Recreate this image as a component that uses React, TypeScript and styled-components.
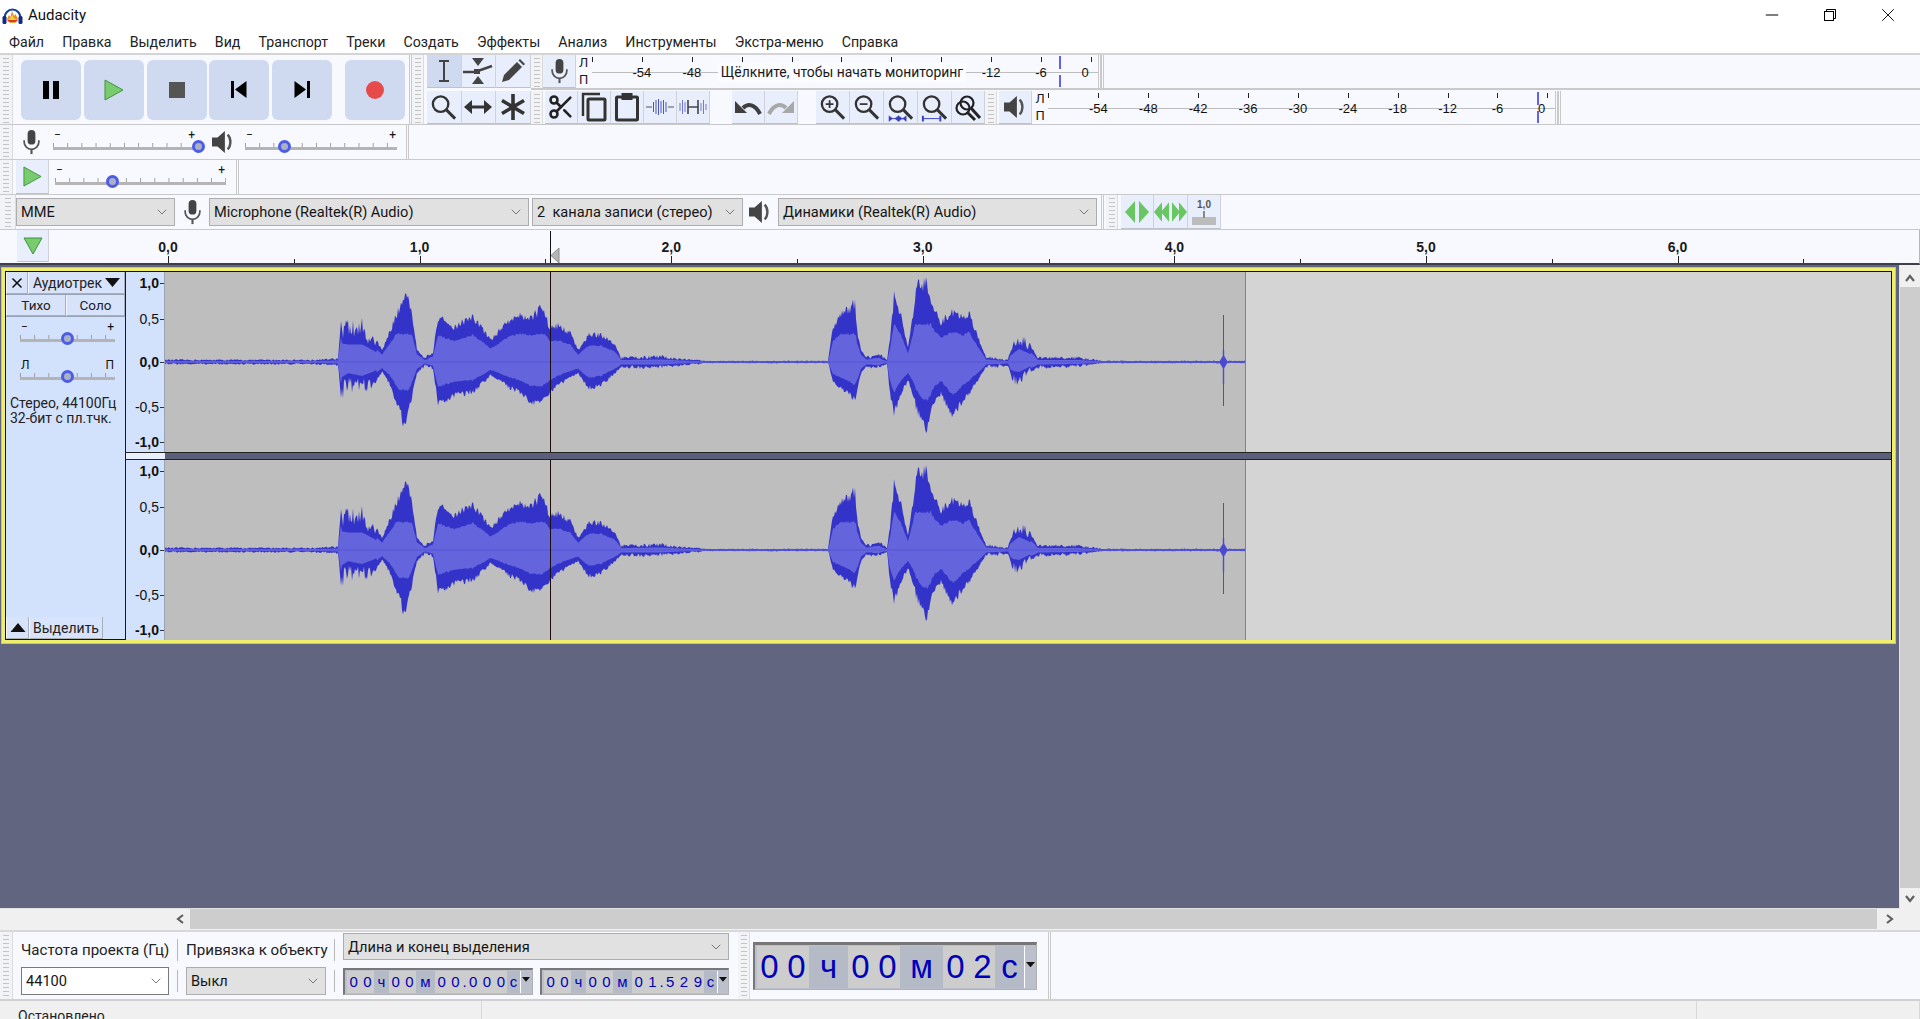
import React from 'react'
import styled, { createGlobalStyle } from 'styled-components'
import { ChevronDown, Minus, Scissors, X } from 'lucide-react'

const GlobalStyle = createGlobalStyle`
    html, body {
        margin: 0;
        padding: 0;
        height: 1019px;
        overflow: hidden;
        background: #f0f0f0;
        font-family: Roboto, "Liberation Sans", sans-serif;
        font-size: 14.5px;
        color: #1a1a1a;
    }
    * { box-sizing: border-box; }
`

const PANEL = '#f8f9fe'
const LINE = '#c9c9c9'
const BTN = '#e8eefb'

const Window = styled.div`
    width: 1920px;
    height: 1019px;
    display: flex;
    flex-direction: column;
    overflow: hidden;
`

/* title + menu */
const TitleBar = styled.div`
    height: 32px;
    flex: none;
    background: #fff;
    display: flex;
    align-items: center;
    padding: 0 3px 2px 2px;
    font-size: 15px;
    color: #111;
`
const AppName = styled.span`
    flex: 1;
    margin-left: 5px;
`
const WinButton = styled.div`
    width: 58px;
    height: 30px;
    display: flex;
    align-items: center;
    justify-content: center;
    color: #000;
`
const MenuBar = styled.div`
    height: 23px;
    flex: none;
    background: #fff;
    display: flex;
    align-items: center;
    padding: 0 0 2px 9px;
    gap: 18.2px;
    border-bottom: 2px solid #d4d4d4;
    font-size: 14.2px;
`
const MenuItem = styled.span`
    color: #222;
    white-space: nowrap;
`

/* toolbars */
const Row = styled.div<{ $h: number }>`
    flex: none;
    height: ${p => p.$h}px;
    display: flex;
    background: ${PANEL};
    border-bottom: 1px solid ${LINE};
`
const Gripper = styled.div<{ $w?: number }>`
    flex: 0 0 ${p => p.$w ?? 13}px;
    align-self: stretch;
    background-color: #f2f3f7;
    background-image: linear-gradient(#c4c4c4 1px, transparent 1px);
    background-size: 6px 4px;
    background-position: center 3px;
    background-repeat: repeat-y;
    border-right: 1px solid #dcdcdc;
`
const Divider = styled.div`
    flex: 0 0 3px;
    align-self: stretch;
    border-left: 1px solid ${LINE};
    border-right: 1px solid ${LINE};
`
const Section = styled.div<{ $w: number }>`
    flex: 0 0 ${p => p.$w}px;
    display: flex;
    align-items: center;
    align-self: stretch;
`
const Spacer = styled.div<{ $w: number }>`
    flex: 0 0 ${p => p.$w}px;
`
const TransportButtons = styled.div`
    display: flex;
    gap: 2.75px;
    padding-left: 8px;
`
const BigButton = styled.div<{ $gap?: number }>`
    width: 60px;
    height: 60px;
    margin-left: ${p => p.$gap ?? 0}px;
    background: #cfdaf0;
    border-radius: 6px;
    display: flex;
    align-items: center;
    justify-content: center;
`
const IconBtn = styled.div<{ $active?: boolean; $w?: number; $h?: number }>`
    flex: 0 0 ${p => p.$w ?? 33}px;
    height: ${p => p.$h ?? 33}px;
    background: ${p => (p.$active ? '#cfdaf0' : BTN)};
    border-right: 1px solid #cfd2d9;
    border-bottom: 1px solid #bfc2c9;
    display: flex;
    align-items: center;
    justify-content: center;
`
const ToolGrid = styled.div`
    display: grid;
    grid-template-columns: repeat(3, 34.5px);
    grid-auto-rows: 33px;
    row-gap: 3px;
    padding-left: 3px;
`
const ToolColumn = styled.div`
    flex: 1;
    display: flex;
    flex-direction: column;
`
const RecRow = styled.div`
    height: 35px;
    display: flex;
    align-items: center;
    border-bottom: 2px solid ${LINE};
`
const EditRow = styled.div`
    height: 33px;
    margin-top: 1px;
    display: flex;
    align-items: center;
`

/* meters */
const Meter = styled.div`
    flex: 0 0 517px;
    align-self: stretch;
    display: flex;
    position: relative;
    margin-left: 2px;
`
const Channels = styled.div`
    flex: 0 0 14px;
    display: flex;
    flex-direction: column;
    justify-content: space-around;
    font-size: 13px;
    line-height: 14px;
    padding-left: 1px;
`
const Scale = styled.div`
    flex: 1;
    display: flex;
    background: linear-gradient(#bdbdbd, #bdbdbd) 0 52% / 100% 1px no-repeat;
`
const MarkLabel = styled.span`
    margin-top: 2px;
    font-size: 13px;
    line-height: 18px;
    transform: translateX(-50%);
    color: #111;
    white-space: nowrap;
    font-family: "Liberation Sans", sans-serif;
`
const Mark = styled.div`
    flex: 0 0 49.9px;
    display: flex;
    flex-direction: column;
    align-items: flex-start;
    &:last-child {
        flex-basis: 4px;
        ${MarkLabel} { transform: translateX(-130%); }
    }
`
const MarkTick = styled.div`
    width: 1px;
    height: 5px;
    margin-top: 2px;
    background: #222;
`
const MeterHint = styled.div`
    position: absolute;
    left: 140px;
    top: 8px;
    width: 248px;
    height: 19px;
    background: #fbfcff;
    font-size: 13.9px;
    line-height: 19px;
    text-align: center;
    white-space: nowrap;
`
const MeterPeak = styled.div<{ $left: number }>`
    position: absolute;
    left: ${p => p.$left}px;
    top: 1px;
    bottom: 1px;
    width: 2px;
    background: linear-gradient(#5f62f0 42%, transparent 42%, transparent 60%, #5f62f0 60%);
`

/* sliders */
const Slider = styled.div<{ $w: number; $left: number }>`
    flex: 0 0 ${p => p.$w}px;
    margin-left: ${p => p.$left}px;
    position: relative;
    height: 24px;
`
const SliderEnds = styled.div`
    display: flex;
    justify-content: space-between;
    height: 11px;
    font-size: 12px;
    line-height: 11px;
    padding: 0 1px;
    color: #111;
`
const SliderTicks = styled.div`
    height: 4px;
    margin-top: 2px;
    background-image: linear-gradient(90deg, #9c9c9c 1px, transparent 1px);
    background-size: 14.2px 100%;
`
const SliderBar = styled.div`
    height: 3px;
    background: #b4b4b4;
`
const Thumb = styled.div`
    position: absolute;
    top: 10px;
    width: 13px;
    height: 13px;
    margin-left: -6.5px;
    border-radius: 50%;
    border: 3px solid #4c5ce6;
    background: #aab0c6;
`

/* combos */
const Combo = styled.div<{ $w: number; $white?: boolean; $h?: number }>`
    flex: 0 0 ${p => p.$w}px;
    width: ${p => p.$w}px;
    height: ${p => p.$h ?? 28}px;
    display: flex;
    align-items: center;
    justify-content: space-between;
    padding: 0 4px 0 4px;
    background: ${p => (p.$white ? '#fff' : '#e1e1e1')};
    border: 1px solid ${p => (p.$white ? '#7a7a7a' : '#adadad')};
    font-size: 14.6px;
    color: #151515;
    white-space: nowrap;
    svg { color: #666; flex: none; }
`
const TopCombo = styled(Combo)`
    align-self: start;
`
const IconSlot = styled.div<{ $w: number }>`
    flex: 0 0 ${p => p.$w}px;
    display: flex;
    justify-content: center;
`

/* ruler */
const RulerBar = styled.div`
    flex: none;
    height: 35px;
    display: flex;
    position: relative;
    background: ${PANEL};
    padding-left: 17px;
    border-right: 1px solid #b8b8b8;
    border-bottom: 2px solid #3e3f4a;
`
const RulerCell = styled.div`
    flex: 0 0 125.8px;
    display: flex;
    flex-direction: column;
    justify-content: flex-end;
    align-items: flex-start;
`
const RulerLabel = styled.span`
    font-weight: 700;
    font-size: 14px;
    line-height: 16px;
    margin-bottom: 1px;
    transform: translateX(-50%);
    font-family: "Liberation Sans", sans-serif;
    color: #1a1a1a;
`
const RulerTick = styled.div<{ $major?: boolean }>`
    width: 1px;
    height: ${p => (p.$major ? 7 : 4)}px;
    background: #222;
`
const PlayPin = styled.div`
    position: absolute;
    left: 550px;
    top: 1px;
    bottom: 0;
    width: 10px;
    border-left: 1px solid #111;
    display: flex;
    align-items: flex-end;
`

/* workspace */
const Workspace = styled.div`
    flex: none;
    height: 665px;
    display: flex;
`
const MainColumn = styled.div`
    flex: 1;
    display: flex;
    flex-direction: column;
    min-width: 0;
`
const TrackArea = styled.div`
    height: 644px;
    background: #62657f;
    padding: 2px 3px 0 1px;
    border-right: 1px solid #e2e2e2;
    border-bottom: 1px solid #e2e2e2;
`
const TrackFrame = styled.div`
    height: 377px;
    border: 4px solid #efef6c;
    outline: 1px solid #c4c486;
    outline-offset: -1px;
    display: flex;
    background: #111;
    padding: 1px;
`
const TrackInfo = styled.div`
    flex: 0 0 120px;
    background: #d2e1fc;
    border-right: 1px solid #1a1a1a;
    display: flex;
    flex-direction: column;
`
const InfoRow = styled.div<{ $h: number }>`
    display: flex;
    flex: 0 0 ${p => p.$h}px;
    border-bottom: 1px solid #9aa3b5;
`
const InfoButton = styled.div<{ $w?: number }>`
    flex: ${p => (p.$w ? `0 0 ${p.$w}px` : 1)};
    display: flex;
    align-items: center;
    justify-content: ${p => (p.$w ? 'center' : 'space-between')};
    padding: ${p => (p.$w ? 0 : '0 4px')};
    background: #d7e3fa;
    border-left: 1px solid #f4f7ff;
    border-right: 1px solid #a8aebb;
    border-bottom: 1px solid #a8aebb;
    font-size: 14px;
    color: #222;
    white-space: nowrap;
`
const InfoCenter = styled(InfoButton)`
    justify-content: center;
    font-size: 13.5px;
`
const InfoSlider = styled.div<{ $top: number }>`
    position: relative;
    height: 24px;
    margin: ${p => p.$top}px 10px 0 14px;
`
const InfoText = styled.div`
    margin: 12px 0 0 4px;
    font-size: 14px;
    line-height: 15px;
    color: #222;
    white-space: nowrap;
`
const InfoFooter = styled.div`
    margin-top: auto;
    height: 22px;
    display: flex;
`
const ChannelStack = styled.div`
    flex: 1;
    display: flex;
    flex-direction: column;
    min-width: 0;
`
const ChannelGap = styled.div`
    flex: 0 0 8px;
    display: flex;
    border-top: 1px solid #222;
    border-bottom: 1px solid #222;
    background: #5c5f7a;
`
const GapRuler = styled.div`
    flex: 0 0 39px;
    background: #e8effd;
`
const Channel = styled.div<{ $h: number }>`
    flex: 0 0 ${p => p.$h}px;
    display: flex;
`
const VRuler = styled.div`
    flex: 0 0 39px;
    background: #d2e1fc;
    display: grid;
    grid-template-rows: 22px 50px 36px 54px 16px;
    border-right: 1px solid #9aa3b5;
`
const VRulerRow = styled.div<{ $strong?: boolean }>`
    display: flex;
    align-items: center;
    justify-content: flex-end;
    font-size: 14px;
    font-family: "Liberation Sans", sans-serif;
    color: #111;
    font-weight: ${p => (p.$strong ? 700 : 400)};
    &::after {
        content: '';
        width: 4px;
        height: 1px;
        margin-left: 1px;
        background: #333;
    }
`
const Clip = styled.div`
    flex: 0 0 1081px;
    position: relative;
    background: #bebebe;
    border-right: 1px solid #828282;
`
const Wave = styled.svg`
    display: block;
`
const Cursor = styled.div`
    position: absolute;
    left: 385px;
    top: 0;
    bottom: 0;
    width: 1px;
    background: #1c0c0c;
`
const EmptyTrack = styled.div`
    flex: 1;
    background: #d4d4d4;
`

/* scrollbars */
const HScroll = styled.div`
    flex: 1;
    display: flex;
    background: #f0f0f0;
    padding-bottom: 1px;
`
const HThumb = styled.div`
    flex: 1;
    background: #cdcdcd;
`
const ScrollArrow = styled.div<{ $w?: number }>`
    flex: 0 0 ${p => p.$w ?? 20}px;
    display: flex;
    align-items: center;
    justify-content: center;
`
const VScroll = styled.div`
    flex: 0 0 20px;
    display: flex;
    flex-direction: column;
    background: #f0f0f0;
    padding-top: 5px;
`
const VThumb = styled.div`
    flex: 1;
    background: #cdcdcd;
`

/* selection bar */
const SelectionBar = styled.div`
    flex: none;
    height: 71px;
    display: flex;
    background: ${PANEL};
    border-top: 2px solid #d8d8d8;
    border-bottom: 2px solid #d0d0d0;
`
const SelectionGrid = styled.div`
    flex: 0 0 725px;
    display: grid;
    grid-template-columns: 148px 17px 140px 17px 386px;
    grid-template-rows: 33px 30px;
    padding: 1px 0 0 8px;
    align-items: center;
    justify-items: start;
`
const SelLabel = styled.div`
    font-size: 15.1px;
    white-space: nowrap;
    color: #222;
    line-height: 20px;
`
const SelSep = styled.div`
    justify-self: center;
    width: 1px;
    height: 22px;
    background: #b8b8b8;
`
const TimeRow = styled.div`
    display: flex;
    justify-content: space-between;
    width: 386px;
`
const TimeBox = styled.div<{ $w: number; $h: number; $big?: boolean }>`
    flex: 0 0 ${p => p.$w}px;
    width: ${p => p.$w}px;
    height: ${p => p.$h}px;
    display: flex;
    background: #bcc0cc;
    border: 1px solid #b0b0b0;
    border-top: ${p => (p.$big ? 3 : 2)}px solid #777;
    border-left: 2px solid #777;
    padding: 1px 1px 1px 2px;
    color: #0000b8;
    font-family: "Liberation Sans", sans-serif;
`
const TimeCell = styled.div<{ $w: number; $unit?: boolean; $size: number; $space?: number }>`
    flex: 0 0 ${p => p.$w}px;
    min-width: 0;
    display: flex;
    align-items: center;
    justify-content: center;
    background: ${p => (p.$unit ? '#b5bac7' : '#cdcdcd')};
    font-size: ${p => p.$size}px;
    letter-spacing: ${p => p.$space ?? 0}px;
    padding-left: ${p => p.$space ?? 0}px;
    line-height: 1;
`
const TimeMenu = styled.div`
    flex: 1;
    min-width: 0;
    border-left: 1px solid #fff;
    background: #bcc0cc;
    display: flex;
    align-items: center;
    justify-content: center;
    padding-bottom: 4px;
`
const BigTimeWrap = styled.div`
    flex: 0 0 298px;
    display: flex;
    align-items: center;
    padding-left: 3px;
`

/* status */
const StatusBar = styled.div`
    flex: 1;
    display: flex;
    background: #f0f0f0;
    font-size: 14px;
    line-height: 17px;
    overflow: hidden;
`
const StatusCell = styled.div<{ $w?: number }>`
    flex: ${p => (p.$w ? `0 0 ${p.$w}px` : 1)};
    border-right: 1px solid #d8d8d8;
    padding: 7px 0 0 18px;
    white-space: nowrap;
    color: #222;
`

/* icons */
const DARK = '#444'
const GREEN = '#79cc6e'
const GREEN_LINE = '#3f9440'

const AppIcon = () => (
    <svg width="21" height="19" viewBox="0 0 21 19">
        <path d="M2.5 12 A8 8.5 0 0 1 18.5 12" fill="none" stroke="#1b3f9e" strokeWidth="2.2" />
        <rect x="0.5" y="10" width="4" height="8" rx="1.5" fill="#14297a" />
        <rect x="16.5" y="10" width="4" height="8" rx="1.5" fill="#14297a" />
        <path d="M5 13 L7 9 L8.5 11 L10 5 L12 10 L13.5 8 L16 13 L13 17 L8 17 Z" fill="#ef8b1d" />
        <path d="M6 14 L9 11 L10.5 9 L12 12 L15 14 L12 16.5 L8.5 16.5 Z" fill="#f2d23b" />
        <path d="M5 14 L16 14 L14 16 L7 16 Z" fill="#e2362a" />
    </svg>
)
const RestoreIcon = () => (
    <svg width="12" height="12" viewBox="0 0 12 12" fill="none" stroke="#000" strokeWidth="1">
        <rect x="0.5" y="2.5" width="9" height="9" />
        <path d="M2.5 2.5 V0.5 H11.5 V9.5 H9.5" />
    </svg>
)
const PauseIcon = () => (
    <svg width="18" height="20" viewBox="0 0 18 20">
        <rect x="1" y="1" width="6" height="18" fill="#000" />
        <rect x="11" y="1" width="6" height="18" fill="#000" />
    </svg>
)
const PlayIcon = ({ w = 20, h = 22 }: { w?: number; h?: number }) => (
    <svg width={w} height={h} viewBox="0 0 20 22">
        <path d="M1 1 L19 11 L1 21 Z" fill={GREEN} stroke={GREEN_LINE} strokeWidth="1" />
    </svg>
)
const StopIcon = () => (
    <svg width="16" height="16" viewBox="0 0 16 16">
        <rect width="16" height="16" fill="#555" />
    </svg>
)
const SkipStartIcon = () => (
    <svg width="16" height="17" viewBox="0 0 16 17">
        <rect x="0" y="0" width="3" height="17" fill="#000" />
        <path d="M15.5 0 V17 L4 8.5 Z" fill="#000" />
    </svg>
)
const SkipEndIcon = () => (
    <svg width="16" height="17" viewBox="0 0 16 17">
        <rect x="13" y="0" width="3" height="17" fill="#000" />
        <path d="M0.5 0 V17 L12 8.5 Z" fill="#000" />
    </svg>
)
const RecordIcon = () => (
    <svg width="18" height="18" viewBox="0 0 18 18">
        <circle cx="9" cy="9" r="9" fill="#e64b4b" />
    </svg>
)
const IBeamIcon = () => (
    <svg width="26" height="26" viewBox="0 0 26 26" fill="none" stroke={DARK} strokeWidth="2">
        <path d="M8 3 H18 M13 3 V23 M8 23 H18" />
    </svg>
)
const EnvelopeIcon = () => (
    <svg width="32" height="30" viewBox="0 0 32 30">
        <path d="M10 2 H22 L16 10 Z M10 28 H22 L16 20 Z" fill={DARK} />
        <path d="M1 16 H13 L30 10" fill="none" stroke={DARK} strokeWidth="2.5" />
        <rect x="12" y="13" width="6" height="5" fill={DARK} />
    </svg>
)
const PencilIcon = () => (
    <svg width="26" height="26" viewBox="0 0 26 26">
        <path d="M2 24 L4 17 L17 4 L22 9 L9 22 Z" fill={DARK} />
        <path d="M18.5 2.5 L20 1 L25 6 L23.5 7.5 Z" fill={DARK} />
    </svg>
)
const GlassIcon = ({ children }: { children?: React.ReactNode }) => (
    <svg width="29" height="30" viewBox="0 0 30 30" fill="none" stroke="#333" strokeWidth="2.4">
        <circle cx="12" cy="12" r="8" />
        <path d="M18 18 L27 27" strokeWidth="3" />
        {children}
    </svg>
)
const ShiftIcon = () => (
    <svg width="28" height="20" viewBox="0 0 28 20">
        <path d="M4 10 H24" stroke="#333" strokeWidth="3" />
        <path d="M0 10 L8 3 V17 Z M28 10 L20 3 V17 Z" fill="#333" />
    </svg>
)
const MultiIcon = () => (
    <svg width="28" height="28" viewBox="0 0 28 28" stroke="#333" strokeWidth="3.6">
        <path d="M14 1 V27 M3 7.5 L25 20.5 M25 7.5 L3 20.5" />
    </svg>
)
const MicIcon = () => (
    <svg width="19" height="26" viewBox="0 0 22 30">
        <rect x="6.5" y="1" width="9" height="17" rx="4.5" fill="#444" />
        <path d="M2.5 13 V15 A8.5 8.5 0 0 0 19.5 15 V13" fill="none" stroke="#555" strokeWidth="2" />
        <path d="M11 23 V29" stroke="#555" strokeWidth="2.4" />
    </svg>
)
const SpeakerIcon = () => (
    <svg width="23" height="24" viewBox="0 0 25 26">
        <path d="M0 8 H6 L14 1 V25 L6 18 H0 Z" fill="#444" />
        <path d="M17 5 C21 9 21 17 17 21" fill="none" stroke="#555" strokeWidth="2.6" />
    </svg>
)
const CopyIcon = () => (
    <svg width="26" height="30" viewBox="0 0 26 30" fill="none" stroke="#333">
        <path d="M2 24 V2 H19" strokeWidth="2.4" />
        <rect x="7" y="7" width="17" height="21" rx="1" strokeWidth="3" />
    </svg>
)
const PasteIcon = () => (
    <svg width="26" height="30" viewBox="0 0 26 30" fill="none" stroke="#333">
        <rect x="2.5" y="5" width="21" height="23" rx="1" strokeWidth="3" />
        <rect x="8" y="1.5" width="10" height="6" fill="#333" strokeWidth="1" />
    </svg>
)
const TrimIcon = () => (
    <svg width="28" height="20" viewBox="0 0 28 20" stroke="#4a55c8" strokeWidth="1" fill="none">
        <path d="M0 10 H6 M22 10 H28" stroke="#555" />
        <path d="M7.5 5 V15 M10 3 V17 M12.5 2 V18 M15 4 V16 M17.5 3 V17 M20 5 V15" />
    </svg>
)
const SilenceIcon = () => (
    <svg width="28" height="20" viewBox="0 0 28 20" fill="none" stroke="#6f78d8" strokeWidth="1">
        <path d="M1 6 V14 M3.5 3 V17 M6 5 V15 M22 6 V14 M24.5 3 V17 M27 7 V13" />
        <path d="M9 3 V17 M19 3 V17 M9 10 H19" stroke="#444" strokeWidth="1.6" />
    </svg>
)
const UndoIcon = ({ flip, color }: { flip?: boolean; color: string }) => (
    <svg width="28" height="18" viewBox="0 0 28 18" style={flip ? { transform: 'scaleX(-1)' } : undefined}>
        <path d="M9 10 C14 5 21 6 26 16" fill="none" stroke={color} strokeWidth="4" />
        <path d="M1 3 L1 15 L13 15 Z" fill={color} />
    </svg>
)
const TwoWay = ({ bars }: { bars?: boolean }) => (
    <g fill="#3a3fc8" stroke="#3a3fc8" strokeWidth="1">
        <path d="M3 27 H21" fill="none" />
        {bars ? (
            <path d="M3 24 V30 M21 24 V30" fill="none" strokeWidth="2" />
        ) : (
            <path d="M9 27 L13 24 V30 Z M17 27 L13 24 V30 Z M7 27 L3 24 V30 Z M17 27 L21 24 V30 Z" strokeWidth="0.3" />
        )}
    </g>
)
const ZoomToggleIcon = () => (
    <svg width="30" height="30" viewBox="0 0 30 30" fill="none" stroke="#222" strokeWidth="2.2">
        <circle cx="14" cy="11" r="6.5" />
        <circle cx="10" cy="16" r="6.5" />
        <path d="M18 16 L27 26" strokeWidth="3" />
        <path d="M14 20 L22 28" strokeWidth="3" />
    </svg>
)
const DownTriangle = () => (
    <svg width="20" height="18" viewBox="0 0 20 18">
        <path d="M1 1 H19 L10 17 Z" fill={GREEN} stroke={GREEN_LINE} strokeWidth="1" />
    </svg>
)
const PlayAtSpeedIcon = () => (
    <svg width="26" height="24" viewBox="0 0 26 22" fill="#69c763" preserveAspectRatio="none">
        <path d="M11 1 V21 L1 11 Z M15 1 V21 L25 11 Z" />
    </svg>
)
const ScrubIcon = () => (
    <svg width="33" height="24" viewBox="0 0 33 22" fill="#69c763" preserveAspectRatio="none">
        <path d="M8 2 V20 L0 11 Z M15 2 V20 L7 11 Z M18 2 V20 L26 11 Z M25 2 V20 L33 11 Z" />
    </svg>
)
const SpeedIcon = () => (
    <svg width="28" height="28" viewBox="0 0 28 28">
        <text x="14" y="10" textAnchor="middle" fontSize="10" fontWeight="700" fontFamily="Liberation Sans" fill="#555">1,0</text>
        <rect x="2" y="19" width="24" height="8" fill="#bcbcbc" />
        <rect x="13" y="13" width="2" height="7" fill="#888" />
    </svg>
)
const Triangle = ({ up, size = 14 }: { up?: boolean; size?: number }) => (
    <svg width={size} height={size * 0.6} viewBox="0 0 10 6">
        <path d={up ? 'M0 6 H10 L5 0 Z' : 'M0 0 H10 L5 6 Z'} fill="#111" />
    </svg>
)
const ArrowChevron = ({ d }: { d: string }) => (
    <svg width="12" height="12" viewBox="0 0 12 12" fill="none" stroke="#606060" strokeWidth="2.2">
        <path d={d} />
    </svg>
)

/* wave form: envelope read off the track, px above / below centre */
const ENVELOPE: [number, number, number][] = [
    [164, 2, 2], [314, 2, 2], [337, 3, 3], [340, 42, 35], [347, 39, 25], [361, 39, 31], [373, 25, 21],
    [381, 12, 10], [388, 29, 21], [398, 52, 45], [404, 70, 66], [410, 52, 38], [416, 12, 11], [424, 4, 3],
    [432, 9, 6], [437, 44, 41], [453, 35, 33], [472, 45, 30], [490, 22, 13], [510, 44, 26], [520, 47, 31],
    [530, 44, 40], [541, 54, 40], [549, 34, 30], [557, 36, 23], [569, 29, 15], [577, 12, 11], [588, 27, 26],
    [600, 27, 23], [614, 17, 11], [620, 4, 5], [660, 5, 5], [680, 3, 3], [695, 2, 2], [705, 1, 1], [827, 1, 1],
    [832, 35, 20], [840, 47, 26], [847, 52, 31], [854, 59, 38], [856, 32, 31], [860, 12, 11], [865, 5, 5],
    [878, 7, 5], [886, 2, 2], [889, 22, 31], [893, 65, 51], [900, 45, 31], [907, 14, 18], [912, 45, 31],
    [915, 74, 45], [925, 80, 70], [933, 52, 41], [940, 40, 31], [952, 50, 55], [962, 44, 38], [968, 50, 31],
    [978, 22, 16], [985, 5, 5], [1007, 2, 3], [1012, 19, 20], [1018, 29, 22], [1028, 19, 11], [1037, 4, 5],
    [1077, 4, 4], [1095, 2, 2], [1100, 1, 1], [1245, 1, 1],
]
const X0 = 164
const MID = 90

function buildWave() {
    let seed = 12345
    const rnd = () => {
        seed = (seed * 16807) % 2147483647
        return seed / 2147483647
    }
    const peakTop: string[] = []
    const peakBot: string[] = []
    const rmsTop: string[] = []
    const rmsBot: string[] = []
    let seg = 0
    for (let x = X0; x <= 1245; x++) {
        while (seg < ENVELOPE.length - 2 && ENVELOPE[seg + 1][0] < x) seg++
        const [x1, t1, b1] = ENVELOPE[seg]
        const [x2, t2, b2] = ENVELOPE[seg + 1]
        const f = (x - x1) / (x2 - x1)
        const top = t1 + (t2 - t1) * f
        const bot = b1 + (b2 - b1) * f
        const spiky = (x > 340 && x < 376) || (x > 1010 && x < 1030)
        const lo = spiky ? 0.55 : 0.9
        const span = spiky ? 0.6 : 0.2
        const j = top > 6 ? lo + rnd() * span : 0.6 + rnd() * 0.8
        const k = bot > 6 ? lo + rnd() * span : 0.6 + rnd() * 0.8
        const px = x - X0
        peakTop.push(`${px},${(MID - top * j).toFixed(1)}`)
        peakBot.unshift(`${px},${(MID + bot * k).toFixed(1)}`)
        const r = spiky ? 0.45 : top > 6 ? 0.58 + rnd() * 0.05 : 0.5
        const cap = x > 880 ? 62 : 46
        rmsTop.push(`${px},${(MID - Math.min(top, cap) * r).toFixed(1)}`)
        rmsBot.unshift(`${px},${(MID + Math.min(bot, cap) * r).toFixed(1)}`)
    }
    return {
        peak: `${peakTop.join(' ')} ${peakBot.join(' ')}`,
        rms: `${rmsTop.join(' ')} ${rmsBot.join(' ')}`,
    }
}
const WAVE = buildWave()

const Waveform = () => (
    <Wave width="1080" height="180" viewBox="0 0 1080 180">
        <polygon points={WAVE.peak} fill="#3333c9" />
        <polygon points={WAVE.rms} fill="#6464dc" />
        <path d={`M0 ${MID} H1080`} stroke="#5555d8" strokeWidth="1" />
        <path d={`M1058.5 ${MID - 47} V${MID + 44}`} stroke="#4a4ad2" strokeWidth="1" />
        <path d={`M1055 ${MID} L1058.5 ${MID - 6} L1062 ${MID} L1058.5 ${MID + 6} Z M1058.5 ${MID - 12} V${MID + 22}`} fill="#4a4ad2" stroke="#4a4ad2" strokeWidth="1.4" />
    </Wave>
)

const MENU = ['Файл', 'Правка', 'Выделить', 'Вид', 'Транспорт', 'Треки', 'Создать', 'Эффекты', 'Анализ', 'Инструменты', 'Экстра-меню', 'Справка']
const DB_ALL = ['', '-54', '-48', '-42', '-36', '-30', '-24', '-18', '-12', '-6', '0']
const DB_REC = ['', '-54', '-48', '', '', '', '', '', '-12', '-6', '0']
const SECONDS = Array.from({ length: 14 }, (_, i) => i)

const MeterScale = ({ marks, children }: { marks: string[]; children?: React.ReactNode }) => (
    <Meter>
        <Channels>
            <span>Л</span>
            <span>П</span>
        </Channels>
        <Scale>
            {marks.map((d, i) => (
                <Mark key={i}>
                    <MarkTick />
                    {d && <MarkLabel>{d}</MarkLabel>}
                </Mark>
            ))}
        </Scale>
        {children}
    </Meter>
)

const GainSlider = ({ w, left, pos }: { w: number; left: number; pos: number }) => (
    <Slider $w={w} $left={left}>
        <SliderEnds>
            <span>−</span>
            <span>+</span>
        </SliderEnds>
        <SliderTicks />
        <SliderBar />
        <Thumb style={{ left: `${pos}%` }} />
    </Slider>
)

const VerticalRuler = () => (
    <VRuler>
        <VRulerRow $strong>1,0</VRulerRow>
        <VRulerRow>0,5</VRulerRow>
        <VRulerRow $strong>0,0</VRulerRow>
        <VRulerRow>-0,5</VRulerRow>
        <VRulerRow $strong>-1,0</VRulerRow>
    </VRuler>
)

const TrackChannel = ({ h }: { h: number }) => (
    <Channel $h={h}>
        <VerticalRuler />
        <Clip>
            <Waveform />
            <Cursor />
        </Clip>
        <EmptyTrack />
    </Channel>
)

const TimeDisplay = ({ h, m, s, ms, big, w }: { h: string; m: string; s: string; ms?: string; big?: boolean; w: number }) => {
    const size = big ? 33 : 15
    const space = big ? 8.7 : 5.5
    const num = big ? 52 : 27
    const unit = big ? 39 : 14
    return (
        <TimeBox $w={w} $h={big ? 48 : 27} $big={big}>
            <TimeCell $w={num} $size={size} $space={space}>{h}</TimeCell>
            <TimeCell $w={unit + (big ? 0 : 1)} $unit $size={size}>ч</TimeCell>
            <TimeCell $w={num} $size={size} $space={space}>{m}</TimeCell>
            <TimeCell $w={unit + (big ? 4 : 5)} $unit $size={size}>м</TimeCell>
            <TimeCell $w={num} $size={size} $space={space}>{s}</TimeCell>
            {ms && <TimeCell $w={5} $size={size}>.</TimeCell>}
            {ms && <TimeCell $w={40} $size={size} $space={space}>{ms}</TimeCell>}
            <TimeCell $w={big ? 29 : 13} $unit $size={size}>с</TimeCell>
            <TimeMenu>
                <Triangle size={big ? 9 : 8} />
            </TimeMenu>
        </TimeBox>
    )
}

export default function App() {
    return (
        <Window>
            <GlobalStyle />
            <TitleBar>
                <AppIcon />
                <AppName>Audacity</AppName>
                <WinButton><Minus size={20} strokeWidth={1.2} /></WinButton>
                <WinButton><RestoreIcon /></WinButton>
                <WinButton><X size={22} strokeWidth={1} /></WinButton>
            </TitleBar>
            <MenuBar>
                {MENU.map(m => <MenuItem key={m}>{m}</MenuItem>)}
            </MenuBar>

            <Row $h={70}>
                <Section $w={409}>
                    <Gripper />
                    <TransportButtons>
                        <BigButton><PauseIcon /></BigButton>
                        <BigButton><PlayIcon /></BigButton>
                        <BigButton><StopIcon /></BigButton>
                        <BigButton><SkipStartIcon /></BigButton>
                        <BigButton><SkipEndIcon /></BigButton>
                        <BigButton $gap={10}><RecordIcon /></BigButton>
                    </TransportButtons>
                </Section>
                <Divider />
                <Section $w={119}>
                    <Gripper $w={12} />
                    <ToolGrid>
                        <IconBtn $active><IBeamIcon /></IconBtn>
                        <IconBtn><EnvelopeIcon /></IconBtn>
                        <IconBtn><PencilIcon /></IconBtn>
                        <IconBtn><GlassIcon /></IconBtn>
                        <IconBtn><ShiftIcon /></IconBtn>
                        <IconBtn><MultiIcon /></IconBtn>
                    </ToolGrid>
                </Section>
                <ToolColumn>
                    <RecRow>
                        <Gripper $w={12} />
                        <IconBtn><MicIcon /></IconBtn>
                        <MeterScale marks={DB_REC}>
                            <MeterHint>Щёлкните, чтобы начать мониторинг</MeterHint>
                            <MeterPeak $left={481} />
                        </MeterScale>
                        <Divider />
                        <Divider />
                    </RecRow>
                    <EditRow>
                        <Gripper $w={12} />
                        <Spacer $w={2} />
                        <IconBtn><Scissors size={28} strokeWidth={2.2} color="#222" /></IconBtn>
                        <IconBtn><CopyIcon /></IconBtn>
                        <IconBtn><PasteIcon /></IconBtn>
                        <IconBtn><TrimIcon /></IconBtn>
                        <IconBtn><SilenceIcon /></IconBtn>
                        <Spacer $w={22} />
                        <IconBtn><UndoIcon color="#3e3e3e" /></IconBtn>
                        <IconBtn><UndoIcon flip color="#a8a8a8" /></IconBtn>
                        <Spacer $w={18} />
                        <IconBtn $w={33.9}>
                            <GlassIcon><path d="M8 12 H16 M12 8 V16" strokeWidth="1.8" /></GlassIcon>
                        </IconBtn>
                        <IconBtn $w={33.9}>
                            <GlassIcon><path d="M8 12 H16" strokeWidth="1.8" /></GlassIcon>
                        </IconBtn>
                        <IconBtn $w={33.9}>
                            <GlassIcon><TwoWay /></GlassIcon>
                        </IconBtn>
                        <IconBtn $w={33.9}>
                            <GlassIcon><TwoWay bars /></GlassIcon>
                        </IconBtn>
                        <IconBtn $w={33.9}><ZoomToggleIcon /></IconBtn>
                        <Gripper $w={12} />
                        <Spacer $w={2} />
                        <IconBtn><SpeakerIcon /></IconBtn>
                        <MeterScale marks={DB_ALL}>
                            <MeterPeak $left={503} />
                        </MeterScale>
                        <Divider />
                        <Divider />
                    </EditRow>
                </ToolColumn>
            </Row>

            <Row $h={35}>
                <Section $w={406}>
                    <Gripper />
                    <IconSlot $w={36}><MicIcon /></IconSlot>
                    <GainSlider w={143} left={4} pos={102} />
                    <Spacer $w={16} />
                    <SpeakerIcon />
                    <GainSlider w={152} left={10} pos={26} />
                </Section>
                <Divider />
            </Row>
            <Row $h={35}>
                <Section $w={236}>
                    <Gripper />
                    <Spacer $w={3} />
                    <IconBtn $w={33} $h={34}><PlayIcon w={19} h={21} /></IconBtn>
                    <GainSlider w={171} left={6} pos={33.5} />
                </Section>
                <Divider />
            </Row>
            <Row $h={35}>
                <Section $w={1101}>
                    <Gripper $w={16} />
                    <Combo $w={159}>MME<ChevronDown size={16} strokeWidth={1.3} /></Combo>
                    <IconSlot $w={34}><MicIcon /></IconSlot>
                    <Combo $w={320}>Microphone (Realtek(R) Audio)<ChevronDown size={16} strokeWidth={1.3} /></Combo>
                    <Spacer $w={3} />
                    <Combo $w={211}>2&nbsp; канала записи (стерео)<ChevronDown size={16} strokeWidth={1.3} /></Combo>
                    <IconSlot $w={35}><SpeakerIcon /></IconSlot>
                    <Combo $w={319}>Динамики (Realtek(R) Audio)<ChevronDown size={16} strokeWidth={1.3} /></Combo>
                </Section>
                <Divider />
                <Spacer $w={2} />
                <Gripper $w={12} />
                <Spacer $w={3} />
                <IconBtn $h={34}><PlayAtSpeedIcon /></IconBtn>
                <IconBtn $h={34}><ScrubIcon /></IconBtn>
                <IconBtn $h={34}><SpeedIcon /></IconBtn>
            </Row>

            <RulerBar>
                <IconBtn $w={32} $h={32}><DownTriangle /></IconBtn>
                <Spacer $w={119} />
                {SECONDS.map(i => (
                    <RulerCell key={i}>
                        {i % 2 === 0 && <RulerLabel>{`${i / 2},0`}</RulerLabel>}
                        <RulerTick $major={i % 2 === 0} />
                    </RulerCell>
                ))}
                <PlayPin>
                    <svg width="9" height="15" viewBox="0 0 9 15"><path d="M0 7.5 L8 0 V15 Z" fill="#b5b5b5" stroke="#8a8a8a" strokeWidth="1" /></svg>
                </PlayPin>
            </RulerBar>

            <Workspace>
                <MainColumn>
                    <TrackArea>
                        <TrackFrame>
                            <TrackInfo>
                                <InfoRow $h={23}>
                                    <InfoButton $w={22}><X size={16} strokeWidth={2.4} color="#111" /></InfoButton>
                                    <InfoButton>Аудиотрек <Triangle size={15} /></InfoButton>
                                </InfoRow>
                                <InfoRow $h={22}>
                                    <InfoCenter $w={60}>Тихо</InfoCenter>
                                    <InfoCenter>Соло</InfoCenter>
                                </InfoRow>
                                <InfoSlider $top={5}>
                                    <SliderEnds><span>−</span><span>+</span></SliderEnds>
                                    <SliderTicks />
                                    <SliderBar />
                                    <Thumb style={{ left: '50%' }} />
                                </InfoSlider>
                                <InfoSlider $top={14}>
                                    <SliderEnds><span>Л</span><span>П</span></SliderEnds>
                                    <SliderTicks />
                                    <SliderBar />
                                    <Thumb style={{ left: '50%' }} />
                                </InfoSlider>
                                <InfoText>
                                    Стерео, 44100Гц
                                    <br />
                                    32-бит с пл.тчк.
                                </InfoText>
                                <InfoFooter>
                                    <InfoButton $w={23}><Triangle up size={16} /></InfoButton>
                                    <InfoButton $w={74}>Выделить</InfoButton>
                                </InfoFooter>
                            </TrackInfo>
                            <ChannelStack>
                                <TrackChannel h={180} />
                                <ChannelGap><GapRuler /></ChannelGap>
                                <TrackChannel h={179} />
                            </ChannelStack>
                        </TrackFrame>
                    </TrackArea>
                    <HScroll>
                        <Spacer $w={172} />
                        <ScrollArrow $w={18}><ArrowChevron d="M8 2 L3 6 L8 10" /></ScrollArrow>
                        <HThumb />
                        <ScrollArrow $w={23}><ArrowChevron d="M4 2 L9 6 L4 10" /></ScrollArrow>
                    </HScroll>
                </MainColumn>
                <VScroll>
                    <ScrollArrow $w={17}><ArrowChevron d="M2 8 L6 3 L10 8" /></ScrollArrow>
                    <VThumb />
                    <ScrollArrow $w={20}><ArrowChevron d="M2 4 L6 9 L10 4" /></ScrollArrow>
                    <Spacer $w={22} />
                </VScroll>
            </Workspace>

            <SelectionBar>
                <Gripper />
                <SelectionGrid>
                    <SelLabel>Частота проекта (Гц)</SelLabel>
                    <SelSep />
                    <SelLabel>Привязка к объекту</SelLabel>
                    <SelSep />
                    <TopCombo $w={386} $h={27}>Длина и конец выделения<ChevronDown size={16} strokeWidth={1.3} /></TopCombo>
                    <Combo $w={148} $white>44100<ChevronDown size={16} strokeWidth={1.3} /></Combo>
                    <SelSep />
                    <Combo $w={140}>Выкл<ChevronDown size={16} strokeWidth={1.3} /></Combo>
                    <SelSep />
                    <TimeRow>
                        <TimeDisplay w={190} h="00" m="00" s="00" ms="000" />
                        <TimeDisplay w={189} h="00" m="00" s="01" ms="529" />
                    </TimeRow>
                </SelectionGrid>
                <Gripper $w={12} />
                <BigTimeWrap>
                    <TimeDisplay big w={284} h="00" m="00" s="02" />
                </BigTimeWrap>
                <Divider />
            </SelectionBar>

            <StatusBar>
                <StatusCell $w={482}>Остановлено</StatusCell>
                <StatusCell $w={1215} />
                <StatusCell />
            </StatusBar>
        </Window>
    )
}
